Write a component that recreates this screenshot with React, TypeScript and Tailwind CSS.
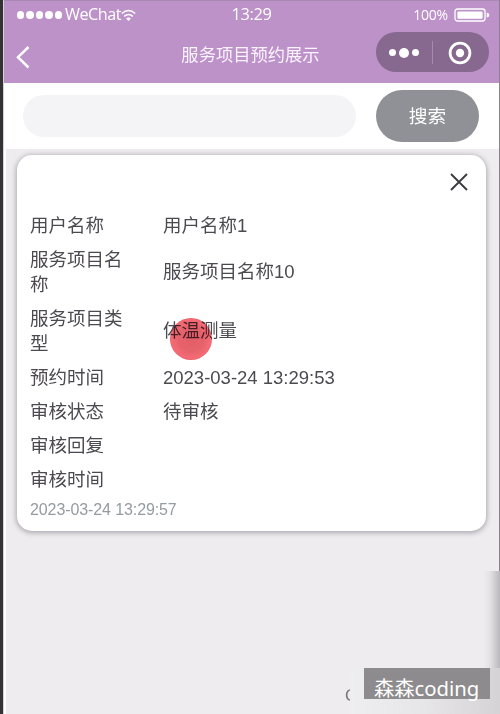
const rows = [
  { label: "用户名称", value: "用户名称1" },
  { label: "服务项目名称", value: "服务项目名称10" },
  { label: "服务项目类型", value: "体温测量" },
  { label: "预约时间", value: "2023-03-24 13:29:53" },
  { label: "审核状态", value: "待审核" },
  { label: "审核回复", value: "" },
  { label: "审核时间", value: "" },
];

function StatusBar() {
  return (
    <div className="grid h-[29px] grid-cols-3 items-start pl-[13px] pr-[9px] pt-[3px] font-['Open_Sans','Noto_Sans',sans-serif] text-white">
      <div className="flex items-center">
        <div className="mt-[2px] flex gap-[2px]">
          {[0, 1, 2, 3, 4].map((i) => (
            <span key={i} className="size-[7.4px] shrink-0 rounded-full bg-white" />
          ))}
        </div>
        <span className="ml-[3px] text-[16.2px] leading-5 font-medium tracking-[-0.45px]">WeChat</span>
        <svg className="h-[15px] w-[15px] shrink-0" viewBox="0 0 16 16" fill="none">
          <g stroke="#fff" strokeWidth="1.6">
            <path d="M0.8 7 Q8 0.6 15.2 7" />
            <path d="M3.4 10 Q8 6.2 12.6 10" />
          </g>
          <path d="M5.4 12.3 Q8 10.2 10.6 12.3 L8 15Z" fill="#fff" />
        </svg>
      </div>
      <span className="pr-1 text-center text-[16.4px] leading-5 font-medium tracking-[-0.4px]">13:29</span>
      <div className="flex items-center justify-end gap-[6px]">
        <span className="pt-px text-[14px] leading-5 font-medium tracking-[-0.2px]">100%</span>
        <svg className="mt-px h-[15px] w-9" viewBox="0 0 36 15">
          <rect x="1" y="1" width="30" height="12" rx="2.5" fill="none" stroke="#fff" strokeWidth="1.3" />
          <rect x="3.4" y="3.4" width="25.2" height="7.4" rx="1" fill="#fff" />
          <path d="M32.7 4.5 Q35.4 5 35.4 7 Q35.4 9.2 32.7 9.5Z" fill="#fff" />
        </svg>
      </div>
    </div>
  );
}

function NavBar() {
  return (
    <div className="grid h-[53px] grid-cols-[100px_1fr_123px] items-start">
      <svg className="mt-[14px] ml-[11px] h-[26px] w-4" viewBox="0 0 16 26" fill="none">
        <path d="M13.5 3 L3 13.2 L13.5 23.5" stroke="#fff" strokeWidth="2.5" />
      </svg>
      <h1 className="mt-3 pl-[21px] text-center text-[17.3px] leading-[26px] whitespace-nowrap text-[#fbf3fd]">
        服务项目预约展示
      </h1>
      <div className="mt-[2px] flex h-[40px] w-[113px] items-center rounded-full bg-[#87688e] pt-px pr-[2px]">
        <div className="flex w-14 items-center justify-center gap-[3px]">
          <span className="size-[7px] rounded-full bg-white" />
          <span className="size-[10px] rounded-full bg-white" />
          <span className="size-[7px] rounded-full bg-white" />
        </div>
        <span className="h-[23px] w-px bg-[#a58aac]" />
        <svg className="mx-auto size-6" viewBox="0 0 24 24">
          <circle cx="12" cy="12" r="9.9" fill="none" stroke="#fff" strokeWidth="2.8" />
          <circle cx="12" cy="12" r="4.2" fill="#fff" />
        </svg>
      </div>
    </div>
  );
}

export default function App() {
  return (
    <div className="relative flex h-[714px] w-[500px] flex-col overflow-hidden border-l-[3px] border-[#353235] bg-[#eeecef] font-['Liberation_Sans','Noto_Sans_CJK_SC',sans-serif]">
      <div className="flex grow flex-col border-r border-l border-r-[#888389] border-l-[#d5d2d6]">
        <header className="border-t border-[#a888b2] bg-[#bc92c9]">
          <StatusBar />
          <NavBar />
        </header>
        <div className="flex h-[66px] items-center bg-white pl-[19px]">
          <div className="h-[42px] w-[333px] rounded-full bg-[#f4f4f6]" />
          <button className="ml-5 h-[52px] w-[103px] rounded-full bg-[#909196] pt-[3px] text-[18.7px] text-white">
            搜索
          </button>
        </div>
        <main className="flex grow flex-col border-l-2 border-white pt-[6px] pr-[13px] pl-[11px]">
          <section className="h-[376px] rounded-[15px] bg-white px-[13px] text-[#4c4a50] shadow-[0_1px_5px_1px_rgba(60,50,65,0.36)]">
            <div className="flex h-[53px] justify-end pt-[18px] pr-[5px]">
              <svg className="size-[18px]" viewBox="0 0 18 18">
                <path d="M1 1 L17 17 M17 1 L1 17" stroke="#3e3b40" strokeWidth="1.9" />
              </svg>
            </div>
            {rows.map((row) => (
              <div key={row.label} className="flex items-center py-[4.5px] text-[18.5px] leading-[25px]">
                <div className="mr-[38px] w-[95px]">{row.label}</div>
                <div>{row.value}</div>
              </div>
            ))}
            <div className="pt-[2px] text-[16px] leading-6 tracking-[-0.1px] text-[#959ba0]">2023-03-24 13:29:57</div>
          </section>
        </main>
      </div>
      <div className="absolute top-[318px] left-[167px] size-[42px] rounded-full border border-[#ee626c]/80 bg-[radial-gradient(circle,rgba(225,75,86,0.9)_0%,rgba(228,82,92,0.9)_45%,rgba(246,92,104,0.9)_72%)] mix-blend-multiply" />
      <div className="absolute top-[571px] right-0 h-[143px] w-[17px] bg-[linear-gradient(to_right,#eeecef,#e3e2e4_40%,#bab8bd)]" />
      <div className="absolute top-[684px] left-[342px] text-[17px] leading-6 text-[#777]">O</div>
      <div className="absolute top-[668px] left-[347px] h-[46px] w-[150px] bg-[linear-gradient(to_right,#eeedef,#e6e5e8_50%,#d5d3d6)]" />
      <div className="absolute top-[668px] left-[361px] h-[31px] w-[126px] bg-[#8d8b8d] pl-[10px] font-['Noto_Sans','Noto_Sans_CJK_SC',sans-serif] text-[20.3px] leading-[40px] whitespace-nowrap text-white">
        森森coding
      </div>
    </div>
  );
}
